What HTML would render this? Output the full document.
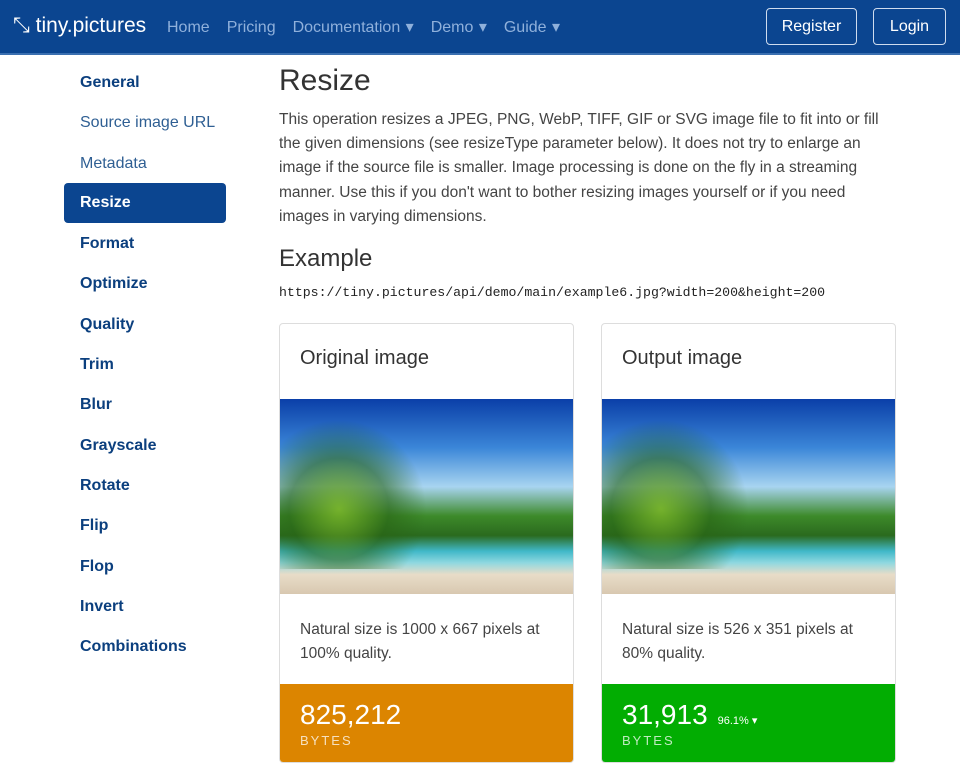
<!DOCTYPE html>
<html><head><style>
*{box-sizing:border-box;margin:0;padding:0}
body{width:960px;height:767px;overflow:hidden;font-family:"Liberation Sans",sans-serif;background:#fff;color:#333}
.nav{height:55px;background:#0b4590;border-bottom:2px solid #3a6fb0;position:relative}
.brand{position:absolute;left:13px;top:14px;color:#fff;font-size:21px}
.links{position:absolute;left:167px;top:17px;font-size:16px;color:#8fb0db;word-spacing:1px}
.links span{margin-right:17px}
.btn{position:absolute;top:8px;height:37px;border:1px solid #cfdcee;border-radius:4px;color:#fff;font-size:16px;line-height:35px;text-align:center}
.side{position:absolute;left:64px;top:62px;width:162px}
.side div{height:40.3px;line-height:42px;padding-left:16px;font-size:16px;font-weight:bold;color:#0b3f7e}
.side div.l{font-weight:normal;color:#2f5f93}
.side div.a{background:#0b4590;color:#fff;border-radius:4px;line-height:40px}
.main{position:absolute;left:279px;top:64px;width:620px}
h1{font-size:30px;font-weight:normal;color:#333;margin-bottom:10px}
p.d{font-size:15.5px;line-height:24.2px;color:#444}
h2{font-size:24px;font-weight:normal;margin-top:16px}
code{display:block;font-family:"Liberation Mono",monospace;font-size:13.2px;margin-top:12px;color:#222}
.card{position:absolute;top:323px;width:295px;height:440px;border:1px solid #ddd;border-radius:4px;overflow:hidden}
.card h3{font-size:20px;font-weight:normal;padding:23px 20px;height:75px}
.img{height:195px;background:linear-gradient(180deg,#0a3fa8 0%,#3b86d8 25%,#a8d4f0 45%,#3d8a2a 60%,#2a6a1e 70%,#40b8c8 78%,#8fd8e0 84%,#e8dcc8 90%,#d8c8b0 100%);position:relative}
.img:before{content:"";position:absolute;left:0;top:20px;width:50%;height:150px;background:radial-gradient(ellipse at 40% 60%,rgba(120,180,40,.9),rgba(40,100,20,.6) 40%,transparent 70%)}
.txt{padding:24px 20px;font-size:15.5px;line-height:24px;height:90px;color:#444}
.stat{height:80px;padding:15px 20px;color:#fff}
.stat b{font-weight:normal;font-size:28px}
.stat small{font-size:11px;margin-left:10px}
.stat i{display:block;font-style:normal;font-size:13px;letter-spacing:2px;opacity:.75;margin-top:2px}
</style></head><body>
<div class="nav">
<div class="brand">&#10529; tiny.pictures</div>
<div class="links"><span>Home</span><span>Pricing</span><span>Documentation ▾</span><span>Demo ▾</span><span>Guide ▾</span></div>
<div class="btn" style="left:766px;width:91px">Register</div>
<div class="btn" style="left:873px;width:73px">Login</div>
</div>
<div class="side">
<div>General</div><div class="l">Source image URL</div><div class="l">Metadata</div><div class="a">Resize</div><div>Format</div><div>Optimize</div><div>Quality</div><div>Trim</div><div>Blur</div><div>Grayscale</div><div>Rotate</div><div>Flip</div><div>Flop</div><div>Invert</div><div>Combinations</div>
</div>
<div class="main">
<h1>Resize</h1>
<p class="d">This operation resizes a JPEG, PNG, WebP, TIFF, GIF or SVG image file to fit into or fill the given dimensions (see resizeType parameter below). It does not try to enlarge an image if the source file is smaller. Image processing is done on the fly in a streaming manner. Use this if you don't want to bother resizing images yourself or if you need images in varying dimensions.</p>
<h2>Example</h2>
<code>https://tiny.pictures/api/demo/main/example6.jpg?width=200&amp;height=200</code>
</div>
<div class="card" style="left:279px"><h3>Original image</h3><div class="img"></div><div class="txt">Natural size is 1000 x 667 pixels at 100% quality.</div><div class="stat" style="background:#dc8500"><b>825,212</b><i>BYTES</i></div></div>
<div class="card" style="left:601px"><h3>Output image</h3><div class="img"></div><div class="txt">Natural size is 526 x 351 pixels at 80% quality.</div><div class="stat" style="background:#02ad02"><b>31,913</b><small>96.1% ▾</small><i>BYTES</i></div></div>
</body></html>
